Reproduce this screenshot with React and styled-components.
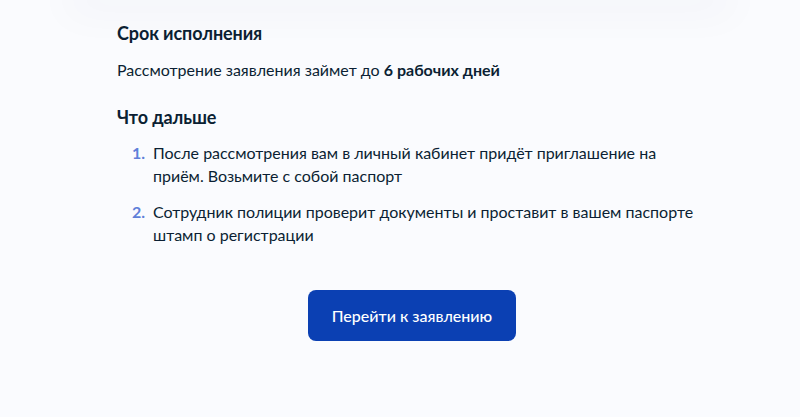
import React from 'react';
import styled, { createGlobalStyle } from 'styled-components';

const GlobalStyle = createGlobalStyle`
  html, body {
    margin: 0;
    padding: 0;
    background: #fafbfe;
  }
  body {
    font-family: Lato, "Noto Sans", sans-serif;
    color: #0b1f33;
    -webkit-font-smoothing: antialiased;
  }
  * { box-sizing: border-box; }
`;

const Page = styled.div`
  width: 800px;
  height: 417px;
  overflow: hidden;
  background: #fafbfe;
`;

// soft shadow left by the card above
const TopShadow = styled.div`
  height: 0;
  margin: 0 80px;
  box-shadow: 0 0 40px 14px rgba(30, 45, 80, 0.035);
`;

const Content = styled.div`
  width: 590px;
  margin-left: 117px;
  padding-top: 21px;
  display: flex;
  flex-direction: column;
`;

const Heading = styled.h3`
  margin: 0;
  font-size: 18px;
  line-height: 24px;
  font-weight: 700;
  letter-spacing: -0.1px;
  margin-top: ${(p) => p.$gap || 0}px;
`;

const Text = styled.p`
  margin: 13px 0 0;
  font-size: 16px;
  line-height: 24px;
  font-weight: 400;

  b {
    font-weight: 700;
  }
`;

const Steps = styled.ol`
  list-style: none;
  margin: 12px 0 0;
  padding: 0 0 0 15px;
  display: flex;
  flex-direction: column;
  gap: 13px;
`;

const Step = styled.li`
  display: flex;
  font-size: 16px;
  line-height: 23px;
`;

const Num = styled.span`
  flex: 0 0 21px;
  font-weight: 700;
  color: #5f7fd9;
`;

const StepText = styled.span`
  width: 546px;
`;

const Actions = styled.div`
  display: flex;
  justify-content: center;
  margin-top: 44px;
`;

const Button = styled.button`
  width: 208px;
  height: 51px;
  border: none;
  border-radius: 8px;
  background: #0b40b3;
  color: #fff;
  font-family: Lato, "Noto Sans", sans-serif;
  font-size: 16px;
  font-weight: 500;
  cursor: pointer;
`;

const steps = [
  'После рассмотрения вам в личный кабинет придёт приглашение на приём. Возьмите с собой паспорт',
  'Сотрудник полиции проверит документы и проставит в вашем паспорте штамп о регистрации',
];

export default function App() {
  return (
    <Page>
      <GlobalStyle />
      <TopShadow />
      <Content>
        <Heading>Срок исполнения</Heading>
        <Text>
          Рассмотрение заявления займет до <b>6 рабочих дней</b>
        </Text>
        <Heading $gap={23}>Что дальше</Heading>
        <Steps>
          {steps.map((s, i) => (
            <Step key={i}>
              <Num>{i + 1}.</Num>
              <StepText>{s}</StepText>
            </Step>
          ))}
        </Steps>
        <Actions>
          <Button>Перейти к заявлению</Button>
        </Actions>
      </Content>
    </Page>
  );
}
